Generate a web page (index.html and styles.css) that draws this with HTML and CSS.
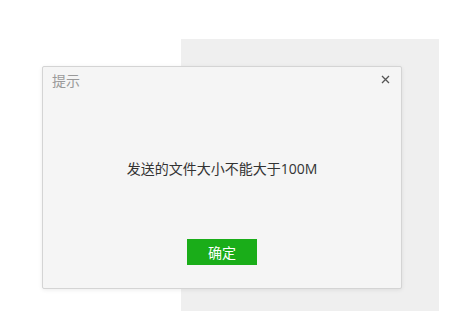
FILE: index.html
```html
<!DOCTYPE html>
<html lang="zh-CN">
<head>
<meta charset="utf-8">
<link rel="stylesheet" href="styles.css">
</head>
<body>
<div class="page">
  <div class="panel"></div>
  <div class="dialog">
    <div class="dialog-head">
      <span class="dialog-title">提示</span>
      <span class="dialog-close">
        <svg width="9" height="9" viewBox="0 0 9 9"><path d="M1 1L8 8M8 1L1 8" stroke="#555" stroke-width="1.3" fill="none"/></svg>
      </span>
    </div>
    <div class="dialog-body">发送的文件大小不能大于<span class="num">100M</span></div>
    <div class="dialog-foot">
      <button class="btn-ok">确定</button>
    </div>
  </div>
</div>
</body>
</html>
```
FILE: styles.css
```css
html, body {
  margin: 0;
  padding: 0;
  background: #fff;
}
.page {
  position: relative;
  width: 465px;
  height: 322px;
  overflow: hidden;
  font-family: "Microsoft YaHei", "Noto Sans CJK SC", "Liberation Sans", sans-serif;
}
.panel {
  margin-left: 181px;
  position: relative;
  top: 39px;
  width: 258px;
  height: 272px;
  background: #efefef;
}
.dialog {
  position: absolute;
  left: 42px;
  top: 66px;
  width: 358px;
  height: 221px;
  background: #f5f5f5;
  border: 1px solid #d4d4d4;
  border-radius: 2px;
  box-shadow: 0 1px 4px rgba(0,0,0,0.08);
  display: flex;
  flex-direction: column;
}
.dialog-head {
  display: flex;
  justify-content: space-between;
  align-items: flex-start;
  padding: 3px 11px 0 9px;
  height: 22px;
}
.dialog-title {
  font-size: 14px;
  line-height: 20px;
  color: #9a9a9a;
}
.dialog-close {
  margin-top: 5px;
  width: 9px;
  height: 9px;
  display: block;
}
.dialog-close svg { display: block; }
.dialog-body {
  margin-top: 66px;
  height: 20px;
  text-align: center;
  font-size: 14px;
  line-height: 20px;
  color: #333;
}
.num {
  font-family: "Open Sans", "Liberation Sans", sans-serif;
  font-size: 14px;
  line-height: 1;
}
.dialog-foot {
  margin-top: 61px;
  display: flex;
  justify-content: center;
}
.btn-ok {
  width: 70px;
  height: 26px;
  border: none;
  margin: 0;
  padding: 0;
  background: #1aad19;
  color: #fff;
  font-family: inherit;
  font-size: 14px;
  line-height: 26px;
  border-radius: 0;
}
```
